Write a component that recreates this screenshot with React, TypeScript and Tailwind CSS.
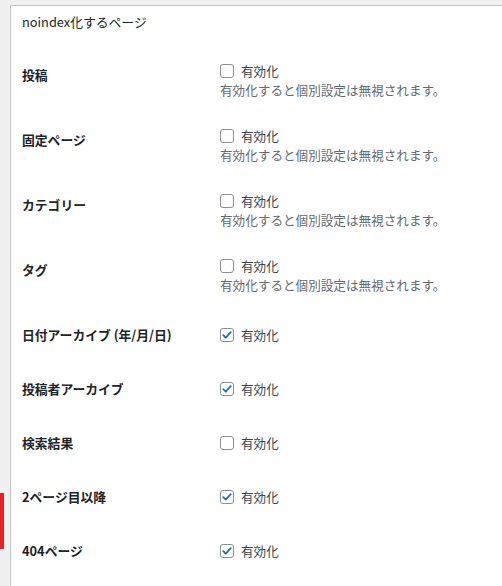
import React from "react";

type Row = { label: string; checked: boolean; note?: boolean };

const rows: Row[] = [
  { label: "投稿", checked: false, note: true },
  { label: "固定ページ", checked: false, note: true },
  { label: "カテゴリー", checked: false, note: true },
  { label: "タグ", checked: false, note: true },
  { label: "日付アーカイブ (年/月/日)", checked: true },
  { label: "投稿者アーカイブ", checked: true },
  { label: "検索結果", checked: false },
  { label: "2ページ目以降", checked: true },
  { label: "404ページ", checked: true },
];

function Checkbox({ checked }: { checked: boolean }) {
  return (
    <span className="flex h-[14px] w-[14px] shrink-0 items-center justify-center rounded-[3px] border border-[#8c8f94] bg-white">
      {checked && (
        <svg viewBox="0 0 14 14" className="h-[12px] w-[12px]">
          <path d="M2.6 7.2 L5.6 10 L11.4 3.6" fill="none" stroke="#2271b1" strokeWidth="2.1" strokeLinecap="round" strokeLinejoin="round" />
        </svg>
      )}
    </span>
  );
}

export default function App() {
  return (
    <div
      className="relative h-[586px] w-[502px] overflow-hidden bg-[#f0f0f1] pl-[10px] pt-[5px] text-[#1d2327]"
      style={{ fontFamily: '"Noto Sans CJK JP", "Noto Sans", sans-serif' }}
    >
      {/* menu highlight */}
      <div className="absolute left-0 top-[493px] h-[56px] w-[4px] bg-[#e8202a]" />

      <div className="h-[600px] w-[520px] border border-[#c3c4c7] bg-white pl-[11px]">
        <h2 className="mb-[19px] mt-[7px] h-[18px] text-[12.8px] leading-[18px] font-normal">noindex化するページ</h2>

        {rows.map((r) => (
          <div key={r.label} className={`flex ${r.note ? "h-[65px]" : "h-[54px]"}`}>
            <div className="w-[198px] shrink-0 pt-[16px] text-[12.8px] font-semibold leading-[18px]">{r.label}</div>
            <div className={r.note ? "pt-[12px]" : "pt-[16px]"}>
              <label className="flex h-[18px] items-center gap-[7px] text-[12.6px]">
                <Checkbox checked={r.checked} />
                <span className="text-[#3c434a]">有効化</span>
              </label>
              {r.note && (
                <p className="h-[19px] text-[12.6px] leading-[19px] text-[#646970]">有効化すると個別設定は無視されます。</p>
              )}
            </div>
          </div>
        ))}
      </div>
    </div>
  );
}
